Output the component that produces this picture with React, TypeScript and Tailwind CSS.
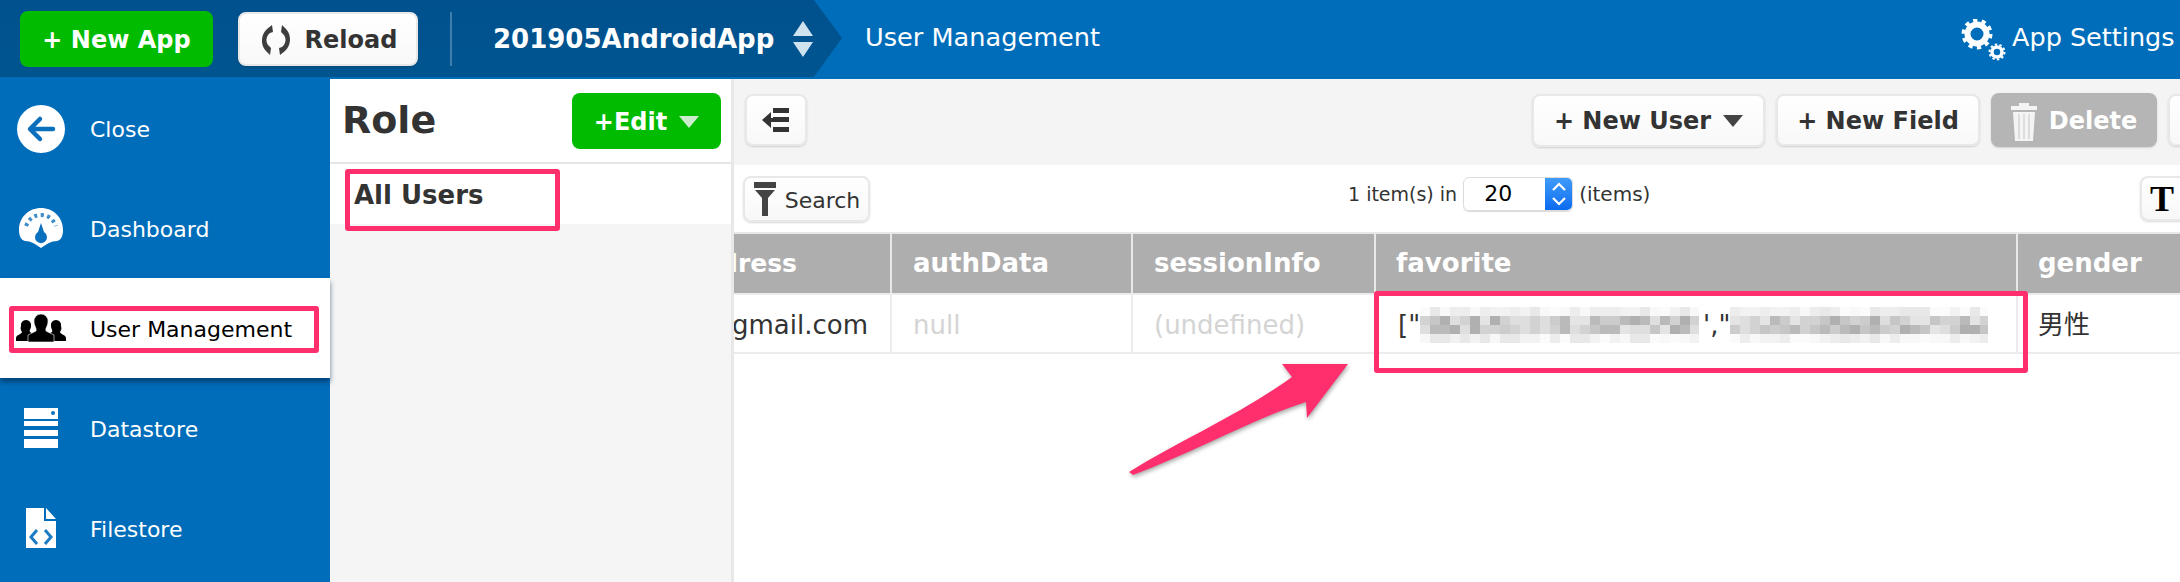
const faintShades = ["#f8f8f8", "#f2f2f2", "#ededed", "#fbfbfb", "#e8e8e8"];
const midShades = ["#dedede", "#d2d2d2", "#c6c6c6", "#bababa", "#e4e4e4", "#cccccc", "#b0b0b0"];

const Mosaic = ({ width, seed }: { width: number; seed: number }) => {
	const cells = [];
	let n = seed;
	for (let y = 0; y < 4; y++) {
		for (let x = 0; x < width / 10; x++) {
			n = (n * 73 + 41) % 1009;
			const shades = y === 0 || y === 3 ? faintShades : midShades;
			cells.push(<rect key={`${x}-${y}`} x={x * 10} y={y * 9} width="10" height="9" fill={shades[n % shades.length]} />);
		}
	}
	return (
		<svg width={width} height="36" className="shrink-0">
			{cells}
		</svg>
	);
};

const SideIcon = ({ name }: { name: string }) => {
	if (name === "close") {
		return (
			<svg width="48" height="48" viewBox="0 0 48 48">
				<circle cx="24" cy="24" r="24" fill="#fff" />
				<path d="M36 24H14M23 14L13 24l10 10" fill="none" stroke="#0a6fbc" strokeWidth="4.5" strokeLinecap="round" strokeLinejoin="round" />
			</svg>
		);
	}
	if (name === "dashboard") {
		return (
			<svg width="44" height="40" viewBox="0 0 44 40">
				<path d="M22 0C34 0 44 9 44 22c0 6-2 10-6 11-6 0-10 3-16 7-6-4-10-7-16-7-4-1-6-5-6-11C0 9 10 0 22 0z" fill="#fff" />
				<path d="M7 18C10 11 15 7 22 7s12 4 15 11" fill="none" stroke="#3f8ec9" strokeWidth="4" strokeDasharray="3 3.5" />
				<path d="M22 15l3 9a6 6 0 1 1-6 0z" fill="#0a6fbc" />
			</svg>
		);
	}
	if (name === "users") {
		return (
			<svg width="50" height="28" viewBox="0 0 50 28">
				<path d="M10 6a5 5 0 0 1 5 6c0 3-2 4-1 6l5 3v6H0v-3c0-3 6-4 6-6-1-2-2-3-1-6a5 5 0 0 1 5-6z" fill="#000" />
				<path d="M40 6a5 5 0 0 0-5 6c0 3 2 4 1 6l-5 3v6h19v-3c0-3-6-4-6-6 1-2 2-3 1-6a5 5 0 0 0-5-6z" fill="#000" />
				<path d="M25 0a7 7 0 0 1 7 8c0 4-3 6-2 9l8 4v7H12v-7l8-4c1-3-2-5-2-9a7 7 0 0 1 7-8z" fill="#000" stroke="#fff" strokeWidth="0.6" />
			</svg>
		);
	}
	if (name === "datastore") {
		return (
			<svg width="34" height="40" viewBox="0 0 34 40">
				<rect width="34" height="11" fill="#fff" />
				<rect y="13" width="34" height="5" fill="#fff" />
				<rect y="22" width="34" height="6" fill="#fff" />
				<rect y="31" width="34" height="9" fill="#fff" />
				<circle cx="29" cy="5" r="2" fill="#0a6fbc" />
			</svg>
		);
	}
	return (
		<svg width="30" height="40" viewBox="0 0 30 40">
			<path d="M0 0h18v13h12v27H0z" fill="#fff" />
			<path d="M20 0l10 11H20z" fill="#fff" />
			<path d="M11 22l-6 7 6 7M19 22l6 7-6 7" fill="none" stroke="#1b7cc4" strokeWidth="3" />
		</svg>
	);
};

const SideItem = ({ icon, label, active, first }: { icon: string; label: string; active?: boolean; first?: boolean }) => (
	<div
		className={`flex items-center ${first ? "h-[99px]" : "h-[100px]"} ${
			active ? "bg-white text-black shadow-[0_4px_5px_rgba(0,40,80,0.6)] relative" : "text-white"
		}`}
	>
		<div className="w-[82px] flex justify-center shrink-0">
			<SideIcon name={icon} />
		</div>
		<span className="ml-[8px] text-[22px] pt-[2px]">{label}</span>
	</div>
);

const btn =
	"flex items-center justify-center bg-gradient-to-b from-white to-[#f8f8f8] border-2 border-[#e8e8e8] rounded-lg shadow-[0_1px_2px_rgba(0,0,0,0.15)] text-[#333]";

const Caret = ({ color }: { color: string }) => (
	<svg width="20" height="12" viewBox="0 0 20 12" className="shrink-0">
		<path d="M0 0h20L10 12z" fill={color} />
	</svg>
);

const App = () => {
	return (
		<div className="relative w-[2180px] h-[582px] overflow-hidden bg-white font-['DejaVu_Sans','Noto_Sans_CJK_JP',sans-serif]">
			{/* top bar */}
			<div className="h-[79px] bg-[#006dba] flex text-white">
				<div className="w-[842px] h-[77px] shrink-0 bg-gradient-to-b from-[#00518e] to-[#00558f] [clip-path:polygon(0_0,814px_0,842px_38px,814px_77px,0_77px)] flex items-center pl-5">
					<div className="w-[193px] h-[56px] bg-[#00bb00] rounded-lg flex items-center justify-center text-[24px] font-bold pt-[2px]">
						+ New App
					</div>
					<div className={`${btn} ml-[25px] w-[180px] h-[54px] gap-3 text-[24px] font-bold pt-[2px]`}>
						<svg width="34" height="30" viewBox="0 0 34 30" className="shrink-0">
							<path d="M13 0L8 4C2 9 1 20 7 26l4 4 1-7-2-2C6 17 7 11 11 8l3-1z" fill="#3d3d3d" />
							<path d="M21 30l5-4c6-5 7-16 1-22l-4-4-1 7 2 2c4 4 3 10-1 13l-3 1z" fill="#3d3d3d" />
						</svg>
						Reload
					</div>
					<div className="ml-8 w-[2px] h-[54px] bg-[#3f7fae]" />
					<div className="ml-[41px] text-[26px] font-bold pt-[2px]">201905AndroidApp</div>
					<svg width="22" height="36" viewBox="0 0 22 36" className="ml-[18px] shrink-0">
						<path d="M11 0l10 15H1zM11 36L1 21h20z" fill="#cfe2f0" />
					</svg>
				</div>
				<div className="ml-[23px] h-[77px] flex items-center text-[25.6px] pb-[2px]">User Management</div>
				<div className="ml-auto h-[77px] flex items-center shrink-0 w-[220px] pb-[2px]">
					<svg width="46" height="42" viewBox="0 0 46 42" className="shrink-0 mt-1">
						<circle cx="17" cy="15" r="9.5" fill="none" stroke="#fff" strokeWidth="6" />
						<circle cx="17" cy="15" r="13.5" fill="none" stroke="#fff" strokeWidth="4" strokeDasharray="4.2 4.28" />
						<circle cx="37" cy="33" r="5" fill="none" stroke="#fff" strokeWidth="3.5" />
						<circle cx="37" cy="33" r="7.5" fill="none" stroke="#fff" strokeWidth="2" strokeDasharray="2.4 2.3" />
					</svg>
					<span className="ml-[6px] text-[25.5px] whitespace-nowrap">App Settings</span>
				</div>
			</div>

			<div className="flex h-[503px]">
				{/* left nav */}
				<div className="w-[330px] shrink-0 bg-[#006dba]">
					<SideItem icon="close" label="Close" first />
					<SideItem icon="dashboard" label="Dashboard" />
					<SideItem icon="users" label="User Management" active />
					<SideItem icon="datastore" label="Datastore" />
					<SideItem icon="file" label="Filestore" />
				</div>

				{/* role list */}
				<div className="w-[404px] shrink-0 bg-[#f5f5f5] border-r-[3px] border-[#e8e8e8] text-[#333]">
					<div className="h-[85px] bg-white border-b-2 border-[#e6e6e6] flex items-center justify-between pl-[12px] pr-[10px]">
						<span className="text-[38px] font-bold">Role</span>
						<div className="w-[149px] h-[56px] bg-[#00bb00] rounded-lg flex items-center justify-center gap-3 text-white text-[24px] font-bold pt-[2px]">
							+Edit
							<Caret color="#cdeccd" />
						</div>
					</div>
					<div className="h-[60px] bg-white pl-[24px] pt-[15px] text-[26px] font-bold leading-[32px]">All Users</div>
				</div>

				{/* users */}
				<div className="flex-1 min-w-0 overflow-hidden">
					<div className="h-[86px] bg-[#f4f4f4] flex items-center pl-[11px] pb-[4px]">
						<div className={`${btn} w-[62px] h-[52px]`}>
							<svg width="28" height="30" viewBox="0 0 28 30">
								<path d="M11 3h16v5H11zM11 12h16v5H11zM11 22h16v5H11z" fill="#333" />
								<path d="M0 15l9-8v16z" fill="#333" />
								<rect x="4" y="13" width="12" height="4" fill="#333" />
							</svg>
						</div>
						<div className="ml-auto flex gap-[11px] items-center shrink-0 -mr-[48px]">
							<div className={`${btn} w-[233px] h-[53px] gap-3 text-[24px] font-bold pt-[2px]`}>
								+ New User
								<Caret color="#444" />
							</div>
							<div className={`${btn} w-[204px] h-[52px] text-[24px] font-bold pt-[2px]`}>+ New Field</div>
							<div className="w-[166px] h-[54px] bg-[#b5b5b5] rounded-lg flex items-center justify-center gap-3 text-white text-[24px] font-bold pt-[2px] shadow-[0_1px_2px_rgba(0,0,0,0.15)]">
								<svg width="26" height="40" viewBox="0 0 26 40" className="shrink-0">
									<path d="M8 2h10v3h8v4H0V5h8zM2 11h22l-2 29H4z" fill="#f4f4f4" />
									<path d="M8 13v25M13 13v25M18 13v25" stroke="#d5d5d5" strokeWidth="1.5" />
								</svg>
								Delete
							</div>
							<div className={`${btn} w-[60px] h-[52px]`} />
						</div>
					</div>

					<div className="h-[67px] flex items-center pl-[9px] text-[#333]">
						<div className={`${btn} w-[127px] h-[46px] gap-2 text-[22px] pt-[3px]`}>
							<svg width="24" height="36" viewBox="0 0 24 36" className="shrink-0 -mt-[3px]">
								<path d="M1 1h22v6H1zM2 9h20l-7 8v18h-6V17z" fill="#444" />
							</svg>
							Search
						</div>
						<span className="ml-[478px] mb-[9px] text-[19px] whitespace-nowrap">1 item(s) in</span>
						<div className="ml-[6px] mb-[10px] w-[110px] h-[34px] flex rounded-md border border-[#ddd] shadow-[0_1px_1px_rgba(0,0,0,0.15)] overflow-hidden">
							<span className="flex-1 pl-[20px] text-[22px] text-black leading-[32px]">20</span>
							<div className="w-[27px] bg-gradient-to-b from-[#3f9bf8] to-[#0a6bf0] flex items-center justify-center">
								<svg width="16" height="28" viewBox="0 0 16 28">
									<path d="M2 10l6-6 6 6M2 18l6 6 6-6" fill="none" stroke="#fff" strokeWidth="2.2" />
								</svg>
							</div>
						</div>
						<span className="ml-[6px] mb-[9px] text-[20px]">(items)</span>
						<div className={`${btn} ml-auto w-[60px] h-[45px] -mr-[20px] justify-start pl-2 shrink-0`}>
							<span className="font-['Liberation_Serif',serif] font-bold text-[36px] text-black leading-none">T</span>
						</div>
					</div>

					{/* table */}
					<div className="flex h-[61px] border-t-2 border-[#e8e8e8] bg-[#aeaeae] text-white text-[26px] font-bold">
						<div className="w-[156px] shrink-0 flex justify-end overflow-hidden pr-[93px] items-center whitespace-nowrap text-[25px]">
							<span className="shrink-0">mailAddress</span>
						</div>
						<div className="w-[241px] shrink-0 border-l-2 border-[#e8e8e8] pl-[21px] flex items-center">authData</div>
						<div className="w-[243px] shrink-0 border-l-2 border-[#e8e8e8] pl-[21px] flex items-center">sessionInfo</div>
						<div className="w-[642px] shrink-0 border-l-2 border-[#e8e8e8] pl-[20px] flex items-center">favorite</div>
						<div className="flex-1 border-l-2 border-[#e8e8e8] pl-[20px] flex items-center">gender</div>
					</div>
					<div className="flex h-[61px] border-t-2 border-b-2 border-[#ececec] text-[26px] text-[#333]">
						<div className="w-[156px] shrink-0 flex justify-end overflow-hidden pr-[22px] pt-[3px] items-center whitespace-nowrap">
							<span className="shrink-0">someone@gmail.com</span>
						</div>
						<div className="w-[241px] shrink-0 border-l-2 border-[#ececec] pl-[21px] pt-[3px] flex items-center text-[#d4d4d4]">null</div>
						<div className="w-[243px] shrink-0 border-l-2 border-[#ececec] pl-[21px] pt-[3px] flex items-center text-[#d4d4d4]">(undefined)</div>
						<div className="w-[642px] shrink-0 border-l-2 border-[#ececec] pl-[22px] pt-[3px] flex items-center overflow-hidden whitespace-nowrap">
							<span>["</span>
							<Mosaic width={279} seed={17} />
							<span className="ml-1">',"</span>
							<Mosaic width={258} seed={251} />
						</div>
						<div className="flex-1 border-l-2 border-[#ececec] pl-[20px] pt-[3px] flex items-center">男性</div>
					</div>
				</div>
			</div>

			{/* pink annotations */}
			<div className="absolute left-[345px] top-[169px] w-[215px] h-[62px] border-[5px] border-[#ff2f6e] rounded-[3px]" />
			<div className="absolute left-[9px] top-[306px] w-[310px] h-[47px] border-[5px] border-[#ff2f6e] rounded-[3px]" />
			<div className="absolute left-[1374px] top-[291px] w-[654px] h-[82px] border-[5px] border-[#ff2f6e] rounded-[3px]" />
			<svg width="2180" height="582" className="absolute left-0 top-0 pointer-events-none drop-shadow-[1px_2px_2px_rgba(0,0,0,0.35)]">
				<path d="M1348 364L1282 364L1292 377C1240 415 1180 440 1129 472L1133 475C1195 452 1250 420 1306 402L1307 418Z" fill="#ff2f6e" />
			</svg>
		</div>
	);
};

export default App;
